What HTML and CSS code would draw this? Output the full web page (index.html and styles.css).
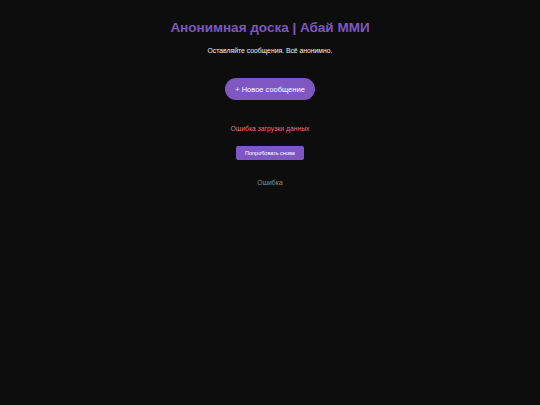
FILE: index.html
```html
<!DOCTYPE html>
<html lang="ru">
<head>
<meta charset="utf-8">
<title>Анонимная доска | Абай ММИ</title>
<link rel="stylesheet" href="styles.css">
</head>
<body>
<main class="page">
  <h1 class="title">Анонимная доска | Абай ММИ</h1>
  <p class="subtitle">Оставляйте сообщения. Всё анонимно.</p>
  <button class="new-btn">+ Новое сообщение</button>
  <p class="error">Ошибка загрузки данных</p>
  <button class="retry-btn">Попробовать снова</button>
  <p class="status">Ошибка</p>
</main>
</body>
</html>
```
FILE: styles.css
```css
html, body {
  margin: 0;
  padding: 0;
  background: #0d0d0d;
  height: 100%;
}
body {
  font-family: "Liberation Sans", Arial, sans-serif;
  color: #ffffff;
}
.page {
  display: flex;
  flex-direction: column;
  align-items: center;
  padding-top: 19px;
}
.title {
  margin: 0;
  font-size: 13.5px;
  line-height: 18px;
  font-weight: bold;
  color: #7e57c2;
}
.subtitle {
  margin: 9px 0 0;
  font-size: 6.8px;
  line-height: 9px;
  color: #f0f0f0;
}
.new-btn {
  margin-top: 23px;
  width: 90px;
  height: 22px;
  border: none;
  border-radius: 11px;
  background: #7e57c2;
  color: #ffffff;
  font-family: inherit;
  font-size: 7.5px;
  padding: 0;
}
.error {
  margin: 24px 0 0;
  font-size: 6.8px;
  line-height: 9px;
  color: #e57373;
}
.retry-btn {
  margin-top: 13px;
  width: 68px;
  height: 14px;
  border: none;
  border-radius: 2px;
  background: #7e57c2;
  color: #ffffff;
  font-family: inherit;
  font-size: 5.5px;
  padding: 0;
}
.status {
  margin: 18px 0 0;
  font-size: 6.8px;
  line-height: 9px;
  color: #8c8c8c;
}
```
